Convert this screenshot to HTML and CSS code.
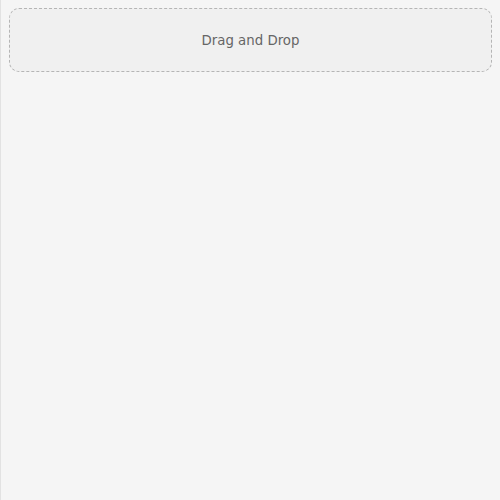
FILE: index.html
```html
<!DOCTYPE html>
<html>
<head>
<meta charset="utf-8">
<link rel="stylesheet" href="styles.css">
</head>
<body>
<div class="panel">
  <div class="dropzone">Drag and Drop</div>
</div>
</body>
</html>
```
FILE: styles.css
```css
html, body {
  margin: 0;
  padding: 0;
  height: 100%;
  background: #f5f5f5;
}
.panel {
  box-sizing: border-box;
  height: 100%;
  border-left: 1px solid #e2e2e2;
  padding: 8px 8px 0 8px;
}
.dropzone {
  box-sizing: border-box;
  height: 64px;
  border: 1px dashed #b5b5b5;
  border-radius: 10px;
  background: #f0f0f0;
  display: flex;
  align-items: center;
  justify-content: center;
  font-family: "DejaVu Sans", sans-serif;
  font-size: 13.33px;
  color: #666;
}
```
